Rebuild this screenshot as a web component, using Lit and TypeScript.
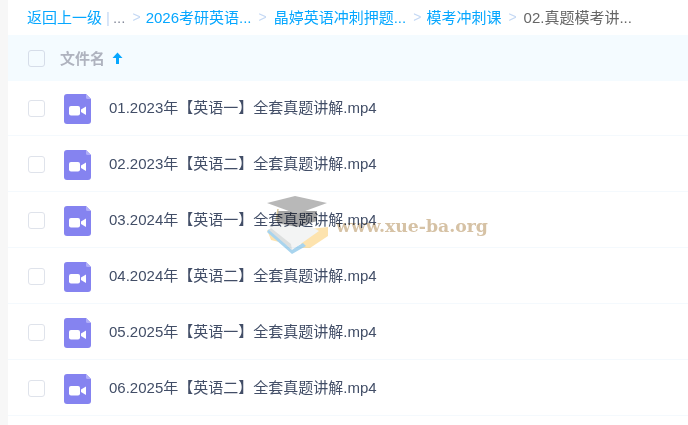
import { LitElement, html, css, svg } from "lit";
import { customElement } from "lit/decorators.js";

const FILES = [
  "01.2023年【英语一】全套真题讲解.mp4",
  "02.2023年【英语二】全套真题讲解.mp4",
  "03.2024年【英语一】全套真题讲解.mp4",
  "04.2024年【英语二】全套真题讲解.mp4",
  "05.2025年【英语一】全套真题讲解.mp4",
  "06.2025年【英语二】全套真题讲解.mp4",
];

const fileIcon = svg`<svg width="27" height="30" viewBox="0 0 27 30">
  <path d="M3 0H22L27 5V27a3 3 0 0 1-3 3H3a3 3 0 0 1-3-3V3a3 3 0 0 1 3-3Z" fill="#8583f0"/>
  <path d="M22 0L27 5H23.5a1.5 1.5 0 0 1-1.5-1.5Z" fill="#b0aef8"/>
  <rect x="5" y="12" width="11" height="9.5" rx="2" fill="#fff"/>
  <path d="M17 15.5L22 12.5V21L17 18Z" fill="#fff"/>
</svg>`;

const cap = svg`<svg width="66" height="64" viewBox="0 0 66 64">
  <path d="M36 36L63 33V42L45 54H36Z" fill="#fde3ae"/>
  <path d="M2 36L6 46L14 48L10 38Z" fill="#fde3ae"/>
  <path d="M2 38L27 60L41 52L38 49L27 55L4 35Z" fill="#a8d4ee"/>
  <path d="M3 32L28 22L54 37L27 56Z" fill="#f3f4f4"/>
  <path d="M6 34L26 50L27 56L4 36Z" fill="#dcdfdf"/>
  <path d="M12 17H52V27L32 33L12 29Z" fill="#a3a3a3"/>
  <path d="M2 9L30 2L62 9L32 20Z" fill="#b8b8b8"/>
  <path d="M13 15L11 27" stroke="#d8c8a0" stroke-width="1.5"/>
</svg>`;

@customElement("app-root")
export class AppRoot extends LitElement {
  static styles = css`
    :host {
      display: block;
      width: 688px;
      height: 425px;
      overflow: hidden;
      position: relative;
      background: #f7f7f7;
      font-family: "Liberation Sans", "Noto Sans CJK SC", sans-serif;
      font-size: 15px;
      color: #424e67;
    }
    .main {
      margin-left: 8px;
      height: 425px;
      background: #fff;
    }
    .crumbs {
      height: 35px;
      display: flex;
      align-items: center;
      padding-left: 19px;
      white-space: nowrap;
      line-height: 35px;
      color: #666;
    }
    .crumbs a { color: #06a7ff; }
    .bar { color: #c4d8f4; margin: 0 3px 0 4px; }
    .dots { color: #878c9c; }
    .sep { color: #c4d8f4; margin: 0 7px 0 7px; font-size: 14px; }
    .sep.tight { margin-right: 5px; }
    .head {
      height: 46px;
      margin-bottom: -1px;
      background: #f4fbff;
      display: flex;
      align-items: center;
      padding-left: 20px;
      position: relative;
    }
    .box {
      width: 15px;
      height: 15px;
      border: 1px solid #dfe3eb;
      border-radius: 3px;
      background: #fff;
      flex: none;
    }
    .head .box { border-color: #d6dde9; background: transparent; }
    .title {
      margin-left: 15px;
      color: #afb3bf;
      font-weight: 700;
      display: flex;
      align-items: center;
      gap: 7px;
    }
    .label { position: relative; top: -1px; }
    .row {
      height: 55px;
      border-bottom: 1px solid #f4f9fd;
      display: flex;
      align-items: center;
      padding-left: 20px;
    }
    .row .box { position: relative; top: 1px; }
    .icon { margin-left: 19px; display: flex; position: relative; top: 1px; }
    .name { margin-left: 18px; white-space: nowrap; position: relative; top: -1px; }
    .mark {
      position: absolute;
      left: 265px;
      top: 194px;
      display: flex;
      align-items: center;
      pointer-events: none;
      mix-blend-mode: multiply;
    }
    .mark span {
      margin-left: 5px;
      font-family: "DejaVu Serif", serif;
      font-weight: 700;
      font-size: 17.3px;
      color: #d6c2a5;
      white-space: nowrap;
    }
  `;

  render() {
    return html`
      <div class="main">
        <div class="crumbs">
          <a>返回上一级</a><span class="bar">|</span><span class="dots">...</span>
          <span class="sep tight">&gt;</span><a>2026考研英语...</a>
          <span class="sep">&gt;</span><a>晶婷英语冲刺押题...</a>
          <span class="sep tight">&gt;</span><a>模考冲刺课</a>
          <span class="sep">&gt;</span><span>02.真题模考讲...</span>
        </div>
        <div class="head">
          <div class="box"></div>
          <div class="title">
            <span class="label">文件名</span>
            <svg width="11" height="12" viewBox="0 0 11 12">
              <path d="M5.5 0.5L10.5 6H7V12H4V6H0.5Z" fill="#06a7ff"/>
            </svg>
          </div>
        </div>
        ${FILES.map(
          (f) => html`<div class="row">
            <div class="box"></div>
            <div class="icon">${fileIcon}</div>
            <div class="name">${f}</div>
          </div>`
        )}
      </div>
      <div class="mark">${cap}<span>www.xue-ba.org</span></div>
    `;
  }
}
